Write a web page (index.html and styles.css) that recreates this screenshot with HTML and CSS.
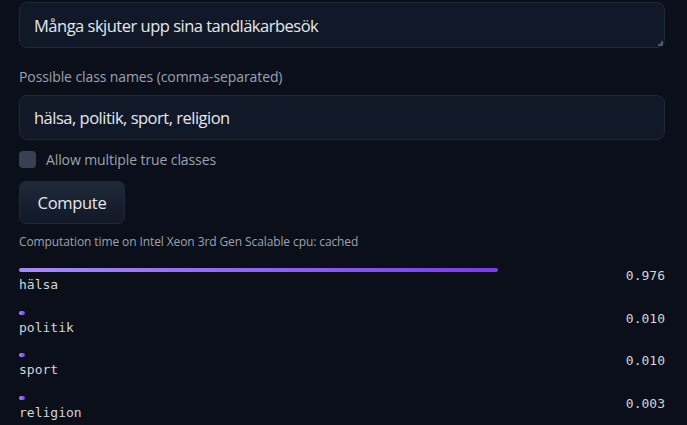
FILE: index.html
```html
<!DOCTYPE html>
<html lang="sv">
<head>
<meta charset="utf-8">
<link rel="stylesheet" href="styles.css">
</head>
<body>
<main class="app">
  <div class="textbox tall"><span>Många skjuter upp sina tandläkarbesök</span><span class="grip"></span></div>
  <label class="field-label">Possible class names (comma-separated)</label>
  <div class="textbox"><span>hälsa, politik, sport, religion</span></div>
  <div class="check-row"><span class="checkbox"></span><span>Allow multiple true classes</span></div>
  <button class="btn">Compute</button>
  <p class="timing">Computation time on Intel Xeon 3rd Gen Scalable cpu: cached</p>
  <ul class="results">
    <li class="row">
      <div class="left"><div class="bar" style="width:79%"></div><div class="name">hälsa</div></div>
      <div class="val">0.976</div>
    </li>
    <li class="row">
      <div class="left"><div class="bar" style="width:6px"></div><div class="name">politik</div></div>
      <div class="val">0.010</div>
    </li>
    <li class="row">
      <div class="left"><div class="bar" style="width:6px"></div><div class="name">sport</div></div>
      <div class="val">0.010</div>
    </li>
    <li class="row">
      <div class="left"><div class="bar" style="width:6px"></div><div class="name">religion</div></div>
      <div class="val">0.003</div>
    </li>
  </ul>
</main>
</body>
</html>
```
FILE: styles.css
```css
* { box-sizing: border-box; }
html, body { margin: 0; padding: 0; background: #0b0f19; height: 100%; overflow: hidden; }
body { font-family: "Open Sans", "Noto Sans", sans-serif; color: #e5e7eb; }
.app { padding: 2px 22px 0 19px; display: flex; flex-direction: column; }
.textbox {
  position: relative;
  height: 45px;
  background: #111827;
  border: 1px solid #1f2937;
  border-radius: 8px;
  display: flex; align-items: center;
  padding: 0 14px;
  font-size: 16.5px;
  letter-spacing: -0.5px;
  color: #e5e7eb;
}
.textbox.tall { height: 46px; }
.grip {
  position: absolute; right: 1px; bottom: 1px; width: 6px; height: 6px;
  background: linear-gradient(135deg, transparent 50%, #4b5563 50%);
}
.field-label { font-size: 14px; color: #9ca3af; margin: 20px 0 9px; letter-spacing: -0.1px; line-height: 18px; }
.check-row { display: flex; align-items: center; gap: 10px; margin-top: 10px; font-size: 14px; color: #9ca3af; letter-spacing: -0.1px; }
.checkbox { width: 17px; height: 17px; background: #374151; border-radius: 4px; }
.btn {
  align-self: flex-start; margin-top: 12px;
  width: 106px; height: 43px;
  background: linear-gradient(#1f2937, #111827);
  border: 1px solid #1f2937;
  border-radius: 7px;
  color: #e5e7eb;
  font-family: inherit; font-size: 16.5px; letter-spacing: -0.3px;
}
.timing { margin: 10px 0 0; font-size: 12px; color: #9ca3af; letter-spacing: -0.1px; line-height: 16px; }
.results { list-style: none; margin: 18px 0 0; padding: 0; display: flex; flex-direction: column; gap: 17.7px; }
.row { display: flex; justify-content: space-between; align-items: flex-start; height: 25px; }
.left { flex: 1; display: flex; flex-direction: column; gap: 5px; }
.bar { height: 4px; border-radius: 2px; background: linear-gradient(90deg, #a78bfa, #7c3aed); }
.name, .val { font-family: "DejaVu Sans Mono", monospace; font-size: 13px; color: #d1d5db; line-height: 16px; }
.val { margin-top: 0; }
```
